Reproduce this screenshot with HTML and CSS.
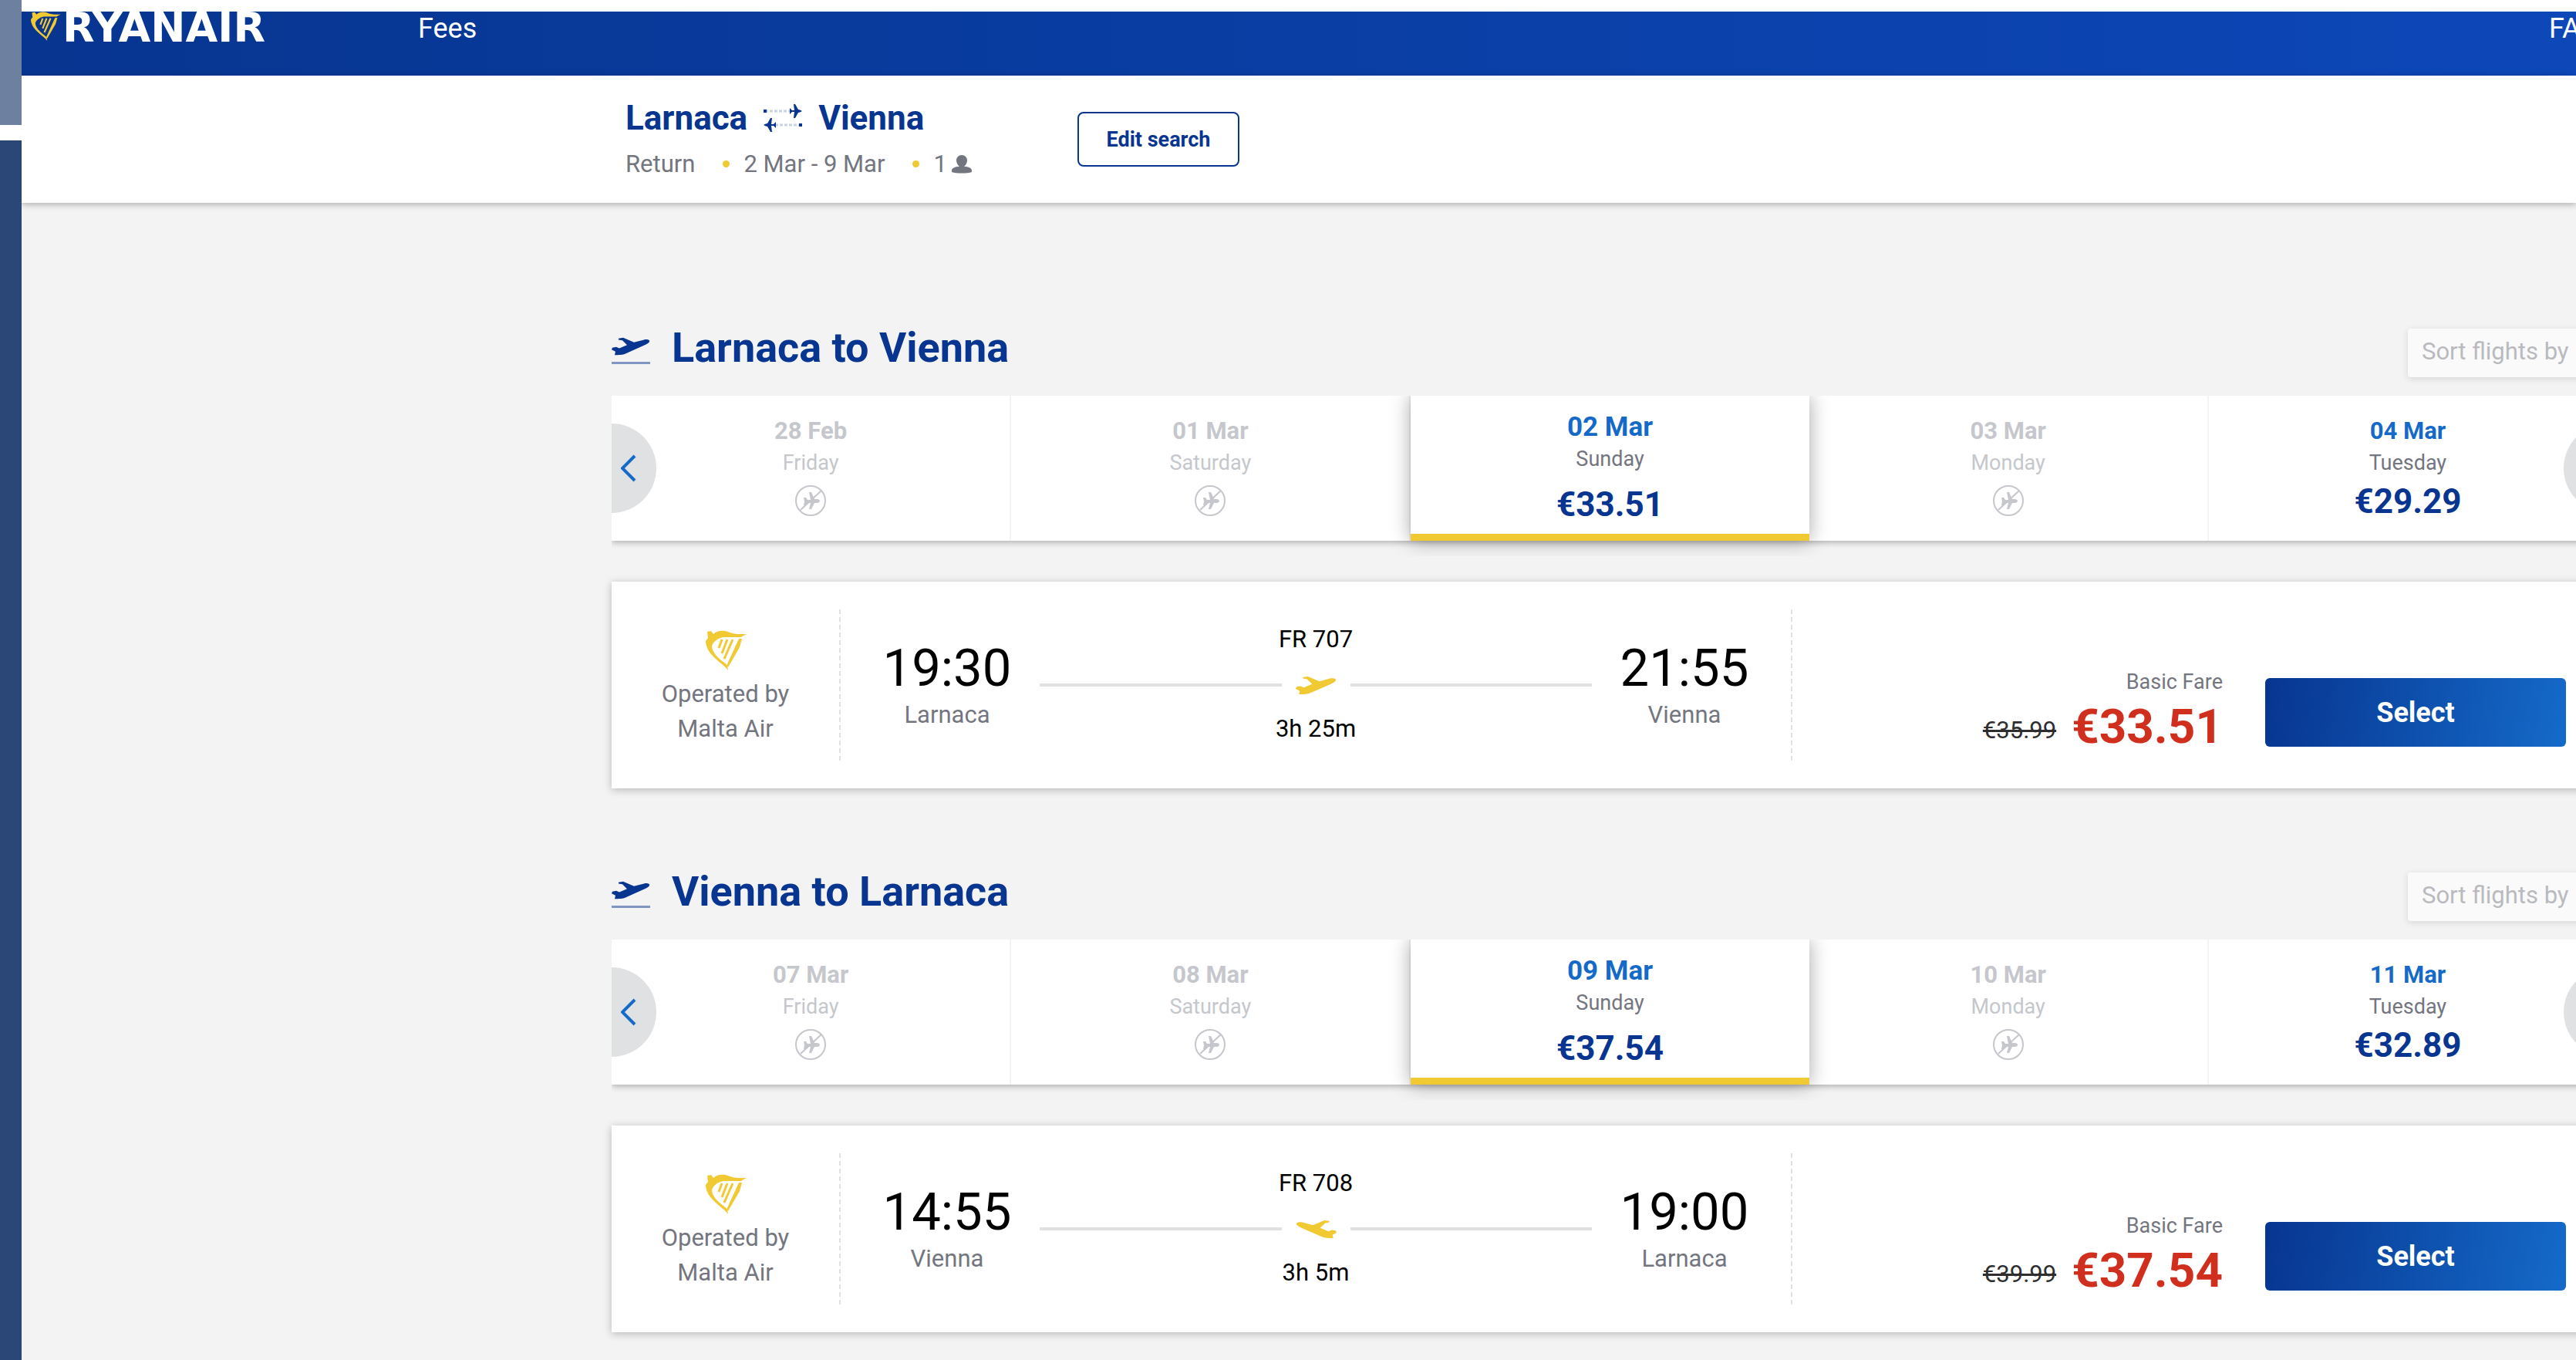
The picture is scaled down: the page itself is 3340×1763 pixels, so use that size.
FILE: index.html
```html
<!DOCTYPE html>
<html lang="en">

<head>
    <meta charset="UTF-8">
    <meta name="viewport" content="width=device-width, initial-scale=1.0">
    <title>Ryanair - Select flights</title>
    <link rel="stylesheet" href="styles.css">
</head>

<body>
    <!-- Shared icons -->
    <svg class="icon-defs" aria-hidden="true">
        <symbol id="harp" viewBox="0 0 54 52">
            <path d="M3 2 L8 1 L11 5 C16 0 24 0 30 2 C38 6 46 5 54 5 L50 7 L47 9 C40 9 30 9 24 9 C17 10 11 15 9 20 C9 26 13 32 20 38 C25 42 28 44 29 46 L30 52 C26 46 20 43 14 37 C6 30 1 22 1 14 L4 10 Z" />
            <path d="M22 12 L18 23 M29 12 L22 30 M36 12 L25 37" class="strings" />
            <path d="M44 11 L48 11 L45 22 L30 48 L28 46 Z" />
        </symbol>
        <symbol id="takeoff" viewBox="0 0 50 28" preserveAspectRatio="none">
            <path d="M9 2 L15 1 L29 8 L42 4 C46 3 50 4 49 7 C48 9 46 10 43 12 L18 25 C15 27 9 27 4 27 L5 22 L0 19 L1 16 L6 15 L10 17 L20 12 L14 5 L9 4 Z" />
        </symbol>
        <symbol id="no-flight" viewBox="0 0 40 40">
            <circle cx="20" cy="20" r="19" class="ring" />
            <path d="M7 32 L34 7" class="ring" />
            <path d="M11 16 L14 16 L16 19 L20 19 L18 9 L21 9 L25 18 L29 18 C33 19 33 22 29 23 L25 23 L21 31 L18 31 L20 23 L16 23 L14 26 L11 26 L12 21 Z" />
        </symbol>
    </svg>

    <!-- Strip on the left side -->
    <div class="side">
        <div class="side-top"></div>
        <div class="side-bottom"></div>
    </div>

    <div class="page">
        <header class="header">
            <a href="#" class="logo">
                <svg class="logo-harp"><use href="#harp" /></svg>
                <span>RYANAIR</span>
            </a>
            <nav class="nav">
                <a href="#">Fees</a>
                <a href="#">FAQ</a>
            </nav>
        </header>

        <!-- Search summary -->
        <div class="summary">
            <div class="trip">
                <h1 class="route">
                    <span>Larnaca</span>
                    <svg class="route-icon" viewBox="0 0 52 36">
                        <path d="M3 9 H36 M16 27 H47" class="trail" />
                        <path d="M1 7 H5 V11 H1 Z M47 25 H51 V29 H47 Z" />
                        <path d="M35 5 L38 8 H41 L40 0 H42 L46 7 C52 8 52 10 46 11 L42 18 H40 L41 10 H38 L35 13 Z" />
                        <path d="M17 23 L14 26 H11 L12 18 H10 L6 25 C0 26 0 28 6 29 L10 36 H12 L11 28 H14 L17 31 Z" />
                    </svg>
                    <span>Vienna</span>
                </h1>
                <div class="details">
                    <span>Return</span>
                    <span class="dot"></span>
                    <span>2 Mar - 9 Mar</span>
                    <span class="dot"></span>
                    <span>1</span>
                    <svg class="person" viewBox="0 0 26 24">
                        <path d="M13 0 C17 0 20 3 20 7 C20 11 17 14 16 15 C22 15 26 17 26 20 V22 C20 24 6 24 0 22 V20 C0 17 4 15 10 15 C9 14 6 11 6 7 C6 3 9 0 13 0 Z" />
                    </svg>
                </div>
            </div>
            <button class="edit-button">Edit search</button>
        </div>

        <main class="flights">
            <section class="journey">
                <div class="journey-header">
                    <div class="journey-icon"><svg class="plane"><use href="#takeoff" /></svg></div>
                    <h2>Larnaca to Vienna</h2>
                    <button class="sort-button">Sort flights by</button>
                </div>
                <div class="carousel">
                    <button class="arrow arrow-left" aria-label="Previous dates">
                        <svg viewBox="0 0 20 36"><path d="M18 2 L2 18 L18 34" /></svg>
                    </button>
                    <div class="date disabled">
                        <b>28 Feb</b>
                        <span>Friday</span>
                        <svg class="no-flight"><use href="#no-flight" /></svg>
                    </div>
                    <div class="date disabled">
                        <b>01 Mar</b>
                        <span>Saturday</span>
                        <svg class="no-flight"><use href="#no-flight" /></svg>
                    </div>
                    <div class="date selected">
                        <b>02 Mar</b>
                        <span>Sunday</span>
                        <strong>€33.51</strong>
                    </div>
                    <div class="date disabled">
                        <b>03 Mar</b>
                        <span>Monday</span>
                        <svg class="no-flight"><use href="#no-flight" /></svg>
                    </div>
                    <div class="date">
                        <b>04 Mar</b>
                        <span>Tuesday</span>
                        <strong>€29.29</strong>
                    </div>
                    <button class="arrow arrow-right" aria-label="Next dates">
                        <svg viewBox="0 0 20 36"><path d="M2 2 L18 18 L2 34" /></svg>
                    </button>
                </div>
                <div class="card">
                    <div class="operator">
                        <svg class="harp"><use href="#harp" /></svg>
                        <span>Operated by</span>
                        <span>Malta Air</span>
                    </div>
                    <div class="schedule">
                        <div class="stop">
                            <div class="time">19:30</div>
                            <div class="city">Larnaca</div>
                        </div>
                        <div class="leg">
                            <div>FR 707</div>
                            <div class="line"><svg class="leg-plane"><use href="#takeoff" /></svg></div>
                            <div>3h 25m</div>
                        </div>
                        <div class="stop">
                            <div class="time">21:55</div>
                            <div class="city">Vienna</div>
                        </div>
                    </div>
                    <div class="fare">
                        <div class="fare-name">Basic Fare</div>
                        <div class="prices">
                            <s>€35.99</s>
                            <strong>€33.51</strong>
                        </div>
                    </div>
                    <button class="select-button">Select</button>
                </div>
            </section>

            <section class="journey">
                <div class="journey-header">
                    <div class="journey-icon"><svg class="plane"><use href="#takeoff" /></svg></div>
                    <h2>Vienna to Larnaca</h2>
                    <button class="sort-button">Sort flights by</button>
                </div>
                <div class="carousel">
                    <button class="arrow arrow-left" aria-label="Previous dates">
                        <svg viewBox="0 0 20 36"><path d="M18 2 L2 18 L18 34" /></svg>
                    </button>
                    <div class="date disabled">
                        <b>07 Mar</b>
                        <span>Friday</span>
                        <svg class="no-flight"><use href="#no-flight" /></svg>
                    </div>
                    <div class="date disabled">
                        <b>08 Mar</b>
                        <span>Saturday</span>
                        <svg class="no-flight"><use href="#no-flight" /></svg>
                    </div>
                    <div class="date selected">
                        <b>09 Mar</b>
                        <span>Sunday</span>
                        <strong>€37.54</strong>
                    </div>
                    <div class="date disabled">
                        <b>10 Mar</b>
                        <span>Monday</span>
                        <svg class="no-flight"><use href="#no-flight" /></svg>
                    </div>
                    <div class="date">
                        <b>11 Mar</b>
                        <span>Tuesday</span>
                        <strong>€32.89</strong>
                    </div>
                    <button class="arrow arrow-right" aria-label="Next dates">
                        <svg viewBox="0 0 20 36"><path d="M2 2 L18 18 L2 34" /></svg>
                    </button>
                </div>
                <div class="card">
                    <div class="operator">
                        <svg class="harp"><use href="#harp" /></svg>
                        <span>Operated by</span>
                        <span>Malta Air</span>
                    </div>
                    <div class="schedule">
                        <div class="stop">
                            <div class="time">14:55</div>
                            <div class="city">Vienna</div>
                        </div>
                        <div class="leg">
                            <div>FR 708</div>
                            <div class="line"><svg class="leg-plane inbound"><use href="#takeoff" /></svg></div>
                            <div>3h 5m</div>
                        </div>
                        <div class="stop">
                            <div class="time">19:00</div>
                            <div class="city">Larnaca</div>
                        </div>
                    </div>
                    <div class="fare">
                        <div class="fare-name">Basic Fare</div>
                        <div class="prices">
                            <s>€39.99</s>
                            <strong>€37.54</strong>
                        </div>
                    </div>
                    <button class="select-button">Select</button>
                </div>
            </section>
        </main>
    </div>
</body>

</html>
```
FILE: styles.css
```css
* {
    box-sizing: border-box;
}

body {
    margin: 0;
    display: flex;
    min-height: 100vh;
    overflow: hidden;
    background-color: white;
    font-family: Roboto, "Liberation Sans", sans-serif;
    font-size: 31px;
    line-height: 45px;
    color: #73757f;
}

h1,
h2 {
    margin: 0;
    color: #073590;
}

button {
    border: none;
    padding: 0;
    font-family: inherit;
    cursor: pointer;
}

a {
    color: white;
    text-decoration: none;
}

svg {
    display: block;
    flex-shrink: 0;
}

.icon-defs {
    position: absolute;
    width: 0;
    height: 0;
}

/* Left strip */
.side {
    width: 28px;
    flex-shrink: 0;
    display: flex;
    flex-direction: column;
    gap: 20px;
}

.side-top {
    height: 162px;
    background-color: #6d809f;
}

.side-bottom {
    flex: 1;
    background-color: #2b4778;
}

.page {
    flex: 1;
    min-width: 0;
    margin-top: 15px;
    background-color: #f3f3f3;
    overflow: hidden;
}

/* Blue header */
.header {
    display: flex;
    align-items: flex-start;
    height: 83px;
    background: linear-gradient(to right, #073590, #0d47b8);
}

.logo {
    display: flex;
    align-items: flex-start;
    gap: 2px;
    width: 514px;
    padding-left: 11px;
    font-family: "DejaVu Sans", Roboto, sans-serif;
    font-size: 54px;
    font-weight: bold;
    line-height: 42px;
}

.logo-harp {
    width: 40px;
    height: 38px;
    fill: #f1c933;
}

.nav {
    flex: 1;
    display: flex;
    justify-content: space-between;
    margin-right: -30px;
    font-size: 36px;
    line-height: 44px;
}

/* Search summary */
.summary {
    position: relative;
    display: flex;
    align-items: flex-start;
    height: 165px;
    padding: 31px 0 0 783px;
    background-color: white;
    box-shadow: 0 2px 8px rgba(0, 0, 0, 0.3);
}

.trip {
    width: 586px;
}

.route {
    display: flex;
    align-items: center;
    gap: 20px;
    font-size: 44px;
    line-height: 48px;
}

.route-icon {
    width: 52px;
    height: 36px;
    fill: #073590;
}

.trail {
    stroke: #c9d3e8;
    stroke-width: 3;
    stroke-dasharray: 4 2;
}

.details {
    display: flex;
    align-items: center;
    margin-top: 13px;
}

.dot {
    width: 9px;
    height: 9px;
    margin: 0 18px 0 36px;
    border-radius: 50%;
    background-color: #f1c933;
}

.person {
    width: 26px;
    height: 24px;
    margin-left: 6px;
    fill: #73757f;
}

.edit-button {
    width: 210px;
    height: 71px;
    margin-top: 16px;
    border: 2px solid #073590;
    border-radius: 8px;
    background-color: white;
    color: #073590;
    font-size: 27px;
    font-weight: bold;
}

/* Flight lists */
.flights {
    margin: 163px -42px 0 765px;
}

.journey {
    margin-bottom: 109px;
}

.journey-header {
    display: flex;
    align-items: flex-start;
    height: 63px;
    margin-bottom: 24px;
}

.journey-icon {
    width: 50px;
    margin-top: 11px;
    padding-bottom: 8px;
    border-bottom: 3px solid #8195c2;
}

.plane {
    width: 50px;
    height: 24px;
    fill: #073590;
}

.journey-header h2 {
    flex: 1;
    margin-left: 28px;
    font-size: 54px;
    line-height: 50px;
}

.sort-button {
    width: 260px;
    height: 63px;
    padding: 0 0 4px 18px;
    border-radius: 4px;
    background-color: #fafafa;
    box-shadow: 0 2px 8px rgba(0, 0, 0, 0.12);
    color: #b9babf;
    font-size: 31px;
    text-align: left;
}

/* Date carousel */
.carousel {
    position: relative;
    display: flex;
    height: 188px;
    margin-bottom: 53px;
    background-color: white;
    box-shadow: 0 2px 8px rgba(0, 0, 0, 0.3);
    clip-path: inset(0 0 -20px 0);
}

.date {
    flex: 1;
    display: flex;
    flex-direction: column;
    align-items: center;
    padding-top: 26px;
    border-right: 2px solid #f3f3f3;
    line-height: 40px;
}

.date b {
    color: #156ac9;
}

.date span {
    font-size: 27px;
    line-height: 42px;
}

.date strong {
    margin-top: 5px;
    color: #073590;
    font-size: 44px;
    line-height: 48px;
}

.date.disabled,
.date.disabled b {
    color: #c5c7cc;
}

.date.selected {
    position: relative;
    padding-top: 21px;
    border-right: none;
    border-bottom: 9px solid #f1c933;
    box-shadow: 0 0 24px rgba(0, 0, 0, 0.35);
    background-color: white;
}

.date.selected b {
    font-size: 35px;
}

.date.selected strong {
    margin-top: 14px;
}

.no-flight {
    width: 40px;
    height: 40px;
    margin-top: 8px;
    fill: #c5c7cc;
}

.ring {
    fill: none;
    stroke: #c5c7cc;
    stroke-width: 2;
}

.arrow {
    position: absolute;
    top: 36px;
    width: 58px;
    height: 116px;
    background-color: #e0e1e3;
}

.arrow svg {
    width: 20px;
    height: 36px;
    margin-left: 12px;
    fill: none;
    stroke: #156ac9;
    stroke-width: 4;
}

.arrow-left {
    left: 0;
    border-radius: 0 58px 58px 0;
}

.arrow-right {
    right: 0;
    border-radius: 58px 0 0 58px;
}

.arrow-right svg {
    margin-left: 26px;
}

/* Flight card */
.card {
    display: flex;
    align-items: center;
    height: 268px;
    padding-right: 55px;
    background-color: white;
    box-shadow: 0 2px 10px rgba(0, 0, 0, 0.25);
}

.operator {
    display: flex;
    flex-direction: column;
    align-items: center;
    width: 297px;
    height: 196px;
    padding-top: 27px;
    border-right: 2px dashed #e0e1e3;
}

.harp {
    width: 54px;
    height: 52px;
    margin-bottom: 8px;
    fill: #f1c933;
}

.strings {
    fill: none;
    stroke: #f1c933;
    stroke-width: 3;
}

.schedule {
    flex: 1;
    display: flex;
    align-items: center;
    justify-content: space-between;
    height: 196px;
    padding: 0 52px;
    border-right: 2px dashed #e0e1e3;
}

.stop {
    width: 172px;
    text-align: center;
}

.time {
    color: black;
    font-size: 67px;
    line-height: 76px;
}

.leg {
    flex: 1;
    margin: 0 34px;
    padding-bottom: 4px;
    color: black;
    text-align: center;
}

.line {
    display: flex;
    align-items: center;
    gap: 18px;
    height: 71px;
    padding-top: 4px;
}

.line::before,
.line::after {
    content: "";
    flex: 1;
    height: 4px;
    background-color: #e0e1e3;
}

.leg-plane {
    width: 53px;
    height: 25px;
    fill: #f1c933;
}

.inbound {
    transform: scaleX(-1);
}

.fare {
    width: 558px;
    padding-top: 62px;
    text-align: right;
}

.fare-name {
    font-size: 27px;
}

.prices {
    display: flex;
    align-items: flex-end;
    justify-content: flex-end;
    gap: 20px;
    line-height: 70px;
}

.prices s {
    color: #2e2e2e;
    line-height: 60px;
}

.prices strong {
    color: #d12f1e;
    font-size: 62px;
}

.select-button {
    align-self: flex-start;
    width: 390px;
    height: 89px;
    margin: 125px 0 0 55px;
    border-radius: 6px;
    background: linear-gradient(100deg, #073590, #156ac9);
    color: white;
    font-size: 36px;
    font-weight: bold;
}
```
